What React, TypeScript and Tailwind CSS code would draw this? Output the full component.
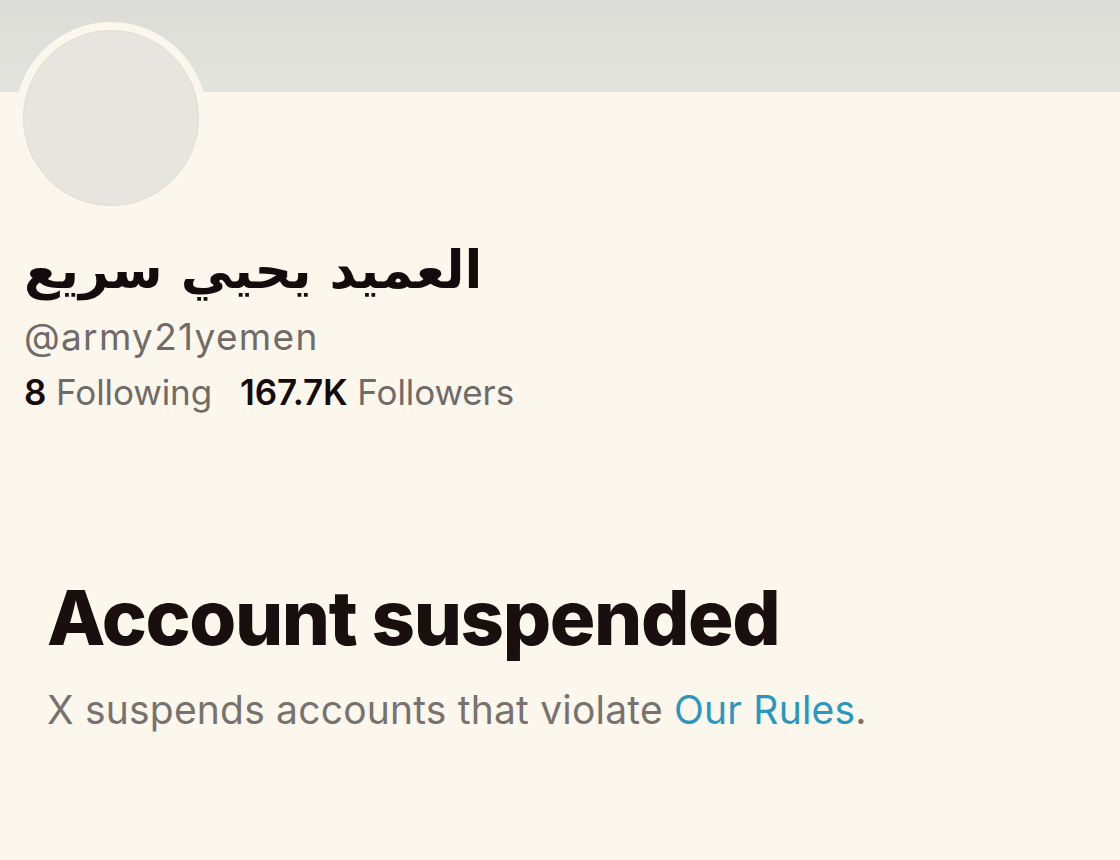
export default function App() {
  return (
    <div className="w-[1120px] h-[860px] bg-[#fcf7ec] overflow-hidden relative" style={{ fontFamily: "Inter, 'Liberation Sans', sans-serif" }}>
      <div className="h-[92px] bg-gradient-to-b from-[#dbdbd7] to-[#e4e4df]" />
      <div className="absolute left-[15px] top-[22px] w-[192px] h-[192px] rounded-full bg-[#fcf7ec] flex items-center justify-center">
        <div className="w-[176px] h-[176px] rounded-full bg-[#e6e5e0] border border-[#dedcd6]" />
      </div>
      <div className="pl-[24px] pt-[148px]">
        <div dir="rtl" className="text-left w-fit text-[52px] leading-[60px] font-bold text-[#140c0c]" style={{ fontFamily: "'DejaVu Sans', sans-serif" }}>العميد يحيي سريع</div>
        <div className="text-[37px] leading-[44px] tracking-[1.3px] text-[#706b69] mt-[15px]">@army21yemen</div>
        <div className="text-[35px] leading-[40px] tracking-[-0.1px] mt-[13px] flex gap-[28px]">
          <span><span className="font-semibold text-[#140c0c]">8</span> <span className="text-[#706b69]">Following</span></span>
          <span><span className="font-semibold text-[#140c0c]">167.7K</span> <span className="text-[#706b69]">Followers</span></span>
        </div>
      </div>
      <div className="pl-[47px] mt-[160px]">
        <div className="text-[76px] leading-[90px] font-extrabold text-[#1a0f0f] tracking-[-1.4px]">Account suspended</div>
        <div className="text-[39px] leading-[46px] tracking-[0.2px] text-[#77726f] mt-[25px]">X suspends accounts that violate <span className="text-[#2b96c0]">Our Rules</span>.</div>
      </div>
    </div>
  );
}
